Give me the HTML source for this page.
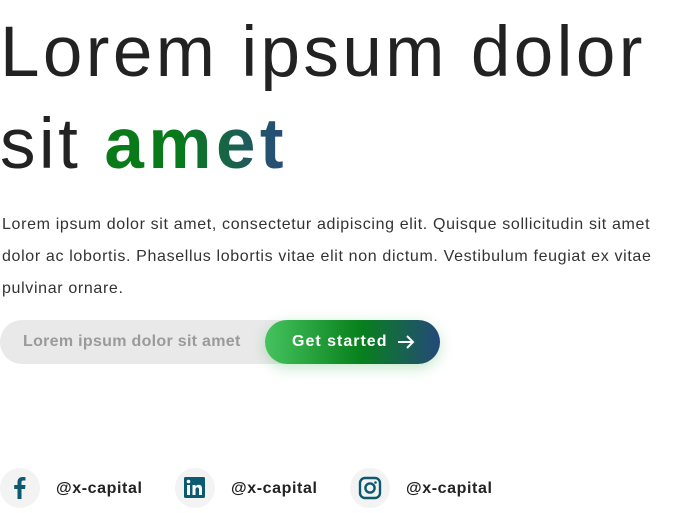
<!DOCTYPE html>
<html><head><style>
body{margin:0;width:684px;height:508px;overflow:hidden;background:#fff;font-family:"Liberation Sans",sans-serif;position:relative}
h1{position:absolute;left:0;top:7px;margin:0;font-weight:400;font-size:71px;line-height:92px;letter-spacing:3.4px;color:#222;width:700px;white-space:nowrap}
h1 b{font-weight:700;letter-spacing:4.5px;background:linear-gradient(90deg,#0a7a18 0%,#077a1a 40%,#2a4a80 100%);-webkit-background-clip:text;background-clip:text;color:transparent}
p{position:absolute;left:2px;top:209px;margin:0;width:668px;font-size:16px;line-height:32px;color:#333;letter-spacing:0.65px}
.pill{position:absolute;left:0;top:320px;width:440px;height:44px;border-radius:22px;background:#e9e9e9}
.pill span{position:absolute;left:23px;top:13px;font-weight:700;font-size:16px;color:#9a9a9a;white-space:nowrap;letter-spacing:.3px}
.btn{position:absolute;left:265px;top:320px;width:175px;height:44px;border-radius:22px;background:linear-gradient(90deg,#45c35e 0%,#08801c 55%,#25487a 100%);box-shadow:0 4px 14px rgba(60,180,80,.3);color:#fff;font-weight:700;font-size:16px;letter-spacing:1px}
.btn span{position:absolute;left:27px;top:13px;white-space:nowrap}
.btn svg{position:absolute;left:132px;top:14px}
.soc{position:absolute;top:468px;height:40px;width:170px}
.soc .c{position:absolute;left:0;top:0;width:40px;height:40px;border-radius:50%;background:#f3f3f3}
.soc .t{position:absolute;left:56px;top:12px;font-size:16px;font-weight:700;color:#222;letter-spacing:.6px;white-space:nowrap}
</style></head><body>
<h1>Lorem ipsum dolor<br>sit <b>amet</b></h1>
<p>Lorem ipsum dolor sit amet, consectetur adipiscing elit. Quisque sollicitudin sit amet dolor ac lobortis. Phasellus lobortis vitae elit non dictum. Vestibulum feugiat ex vitae pulvinar ornare.</p>
<div class="pill"><span>Lorem ipsum dolor sit amet</span></div>
<div class="btn"><span>Get started</span><svg width="18" height="16" viewBox="0 0 18 16"><path d="M1 8H16M10 2L16 8L10 14" stroke="#fff" stroke-width="2" fill="none"/></svg></div>
<div class="soc" style="left:0"><div class="c"><svg width="40" height="40" viewBox="0 0 40 40"><path d="M21.5 31V21H25l.5-4h-4v-2.5c0-1.2.4-2 2-2h2V9.2c-.4 0-1.6-.2-3-.2-3 0-5 1.8-5 5.2V17h-3.3v4H17.5v10z" fill="#0b5a70"/></svg></div><div class="t">@x-capital</div></div>
<div class="soc" style="left:175px"><div class="c"><svg width="40" height="40" viewBox="0 0 40 40"><rect x="9" y="9" width="21" height="21" rx="1.5" fill="#0b5a70"/><rect x="12" y="17" width="3" height="10" fill="#fff"/><circle cx="13.5" cy="13.5" r="1.8" fill="#fff"/><path d="M17.5 17h3v1.5c.7-1.2 1.8-1.8 3.2-1.8 2.5 0 3.3 1.6 3.3 4V27h-3v-5.5c0-1.3-.4-2.1-1.6-2.1-1.3 0-1.9.9-1.9 2.2V27h-3z" fill="#fff"/></svg></div><div class="t">@x-capital</div></div>
<div class="soc" style="left:350px"><div class="c"><svg width="40" height="40" viewBox="0 0 40 40"><rect x="10" y="10" width="20" height="20" rx="5" fill="none" stroke="#0b5a70" stroke-width="2.4"/><circle cx="20" cy="20" r="4.6" fill="none" stroke="#0b5a70" stroke-width="2.4"/><circle cx="25.5" cy="14.5" r="1.3" fill="#0b5a70"/></svg></div><div class="t">@x-capital</div></div>
</body></html>
